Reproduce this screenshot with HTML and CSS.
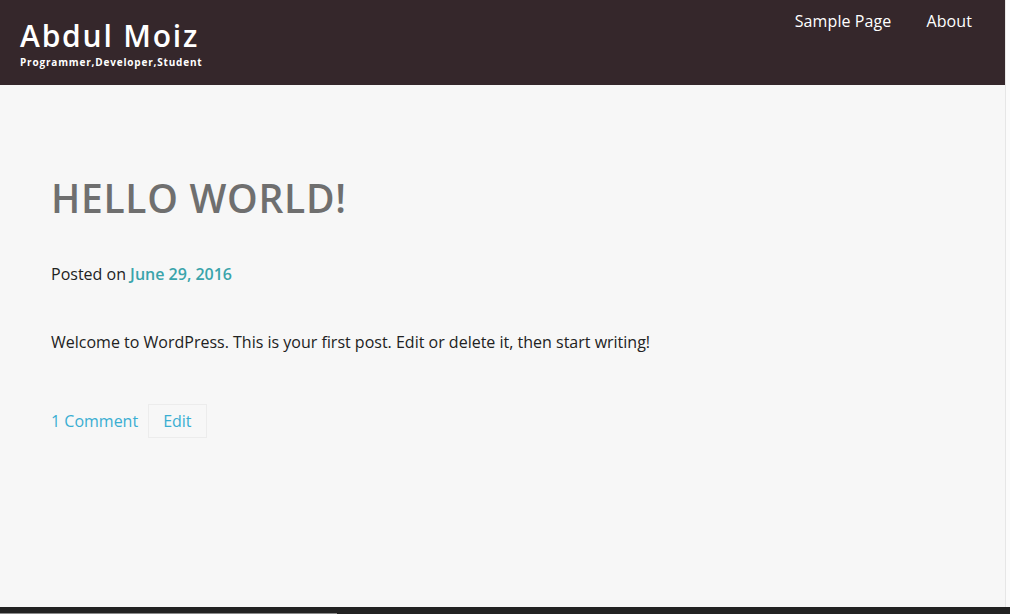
FILE: index.html
```html
<!DOCTYPE html>
<html>
<head>
<meta charset="utf-8">
<link rel="stylesheet" href="styles.css">
</head>
<body>
<div class="page">
  <div class="main">
    <header class="masthead">
      <div class="brand">
        <div class="site-title">Abdul Moiz</div>
        <div class="tagline">Programmer,Developer,Student</div>
      </div>
      <nav class="nav">
        <a href="#">Sample Page</a>
        <a href="#">About</a>
      </nav>
    </header>
    <article class="post">
      <h1 class="post-title">HELLO WORLD!</h1>
      <div class="meta">Posted on <a class="date" href="#">June 29, 2016</a></div>
      <p class="content">Welcome to WordPress. This is your first post. Edit or delete it, then start writing!</p>
      <div class="foot">
        <a class="comments" href="#">1 Comment</a>
        <a class="edit" href="#">Edit</a>
      </div>
    </article>
  </div>
  <div class="edge"></div>
</div>
<div class="bottombar"><div class="tab"></div></div>
</body>
</html>
```
FILE: styles.css
```css
html, body {
  margin: 0;
  padding: 0;
  height: 614px;
  overflow: hidden;
  background: #f7f7f7;
  font-family: "Open Sans", "Noto Sans", sans-serif;
}
.page {
  display: flex;
  height: 607px;
}
.main {
  width: 1006px;
  display: flex;
  flex-direction: column;
}
.edge {
  width: 4px;
  background: #fbfbfb;
  border-left: 1px solid #e6e6e6;
}
.masthead {
  height: 85px;
  background: #35272b;
  display: flex;
  justify-content: space-between;
  align-items: flex-start;
  box-sizing: border-box;
  padding: 0 33px 0 20px;
}
.brand {
  padding-top: 17px;
}
.site-title {
  color: #ffffff;
  font-size: 30px;
  font-weight: 600;
  letter-spacing: 1.8px;
  line-height: 38px;
}
.tagline {
  color: #ffffff;
  font-size: 10px;
  font-weight: 700;
  letter-spacing: 0.82px;
  line-height: 14px;
}
.nav {
  display: flex;
  gap: 35px;
  padding-top: 9px;
}
.nav a {
  color: #ffffff;
  text-decoration: none;
  font-size: 16px;
  line-height: 24px;
  letter-spacing: 0.1px;
}
.post {
  padding: 89px 51px 0;
}
.post-title {
  margin: 0;
  font-size: 39px;
  font-weight: 600;
  color: #6f6f6f;
  line-height: 48px;
  letter-spacing: 0.7px;
}
.meta {
  margin-top: 40px;
  font-size: 16px;
  line-height: 24px;
  color: #222;
}
.date {
  color: #3aa4ab;
  font-weight: 600;
  text-decoration: none;
}
.content {
  margin: 44px 0 0;
  font-size: 16px;
  line-height: 24px;
  color: #222;
}
.foot {
  margin-top: 50px;
  display: flex;
  align-items: center;
  gap: 10px;
}
.foot a {
  color: #3aaed2;
  text-decoration: none;
  font-size: 16px;
  line-height: 24px;
}
.edit {
  border: 1px solid #ececec;
  padding: 4px 14px;
}
.bottombar {
  height: 7px;
  background: #222222;
  position: relative;
}
.tab {
  width: 337px;
  height: 1px;
  background: #8a8a8a;
  position: absolute;
  left: 0;
  bottom: 0;
}
```
